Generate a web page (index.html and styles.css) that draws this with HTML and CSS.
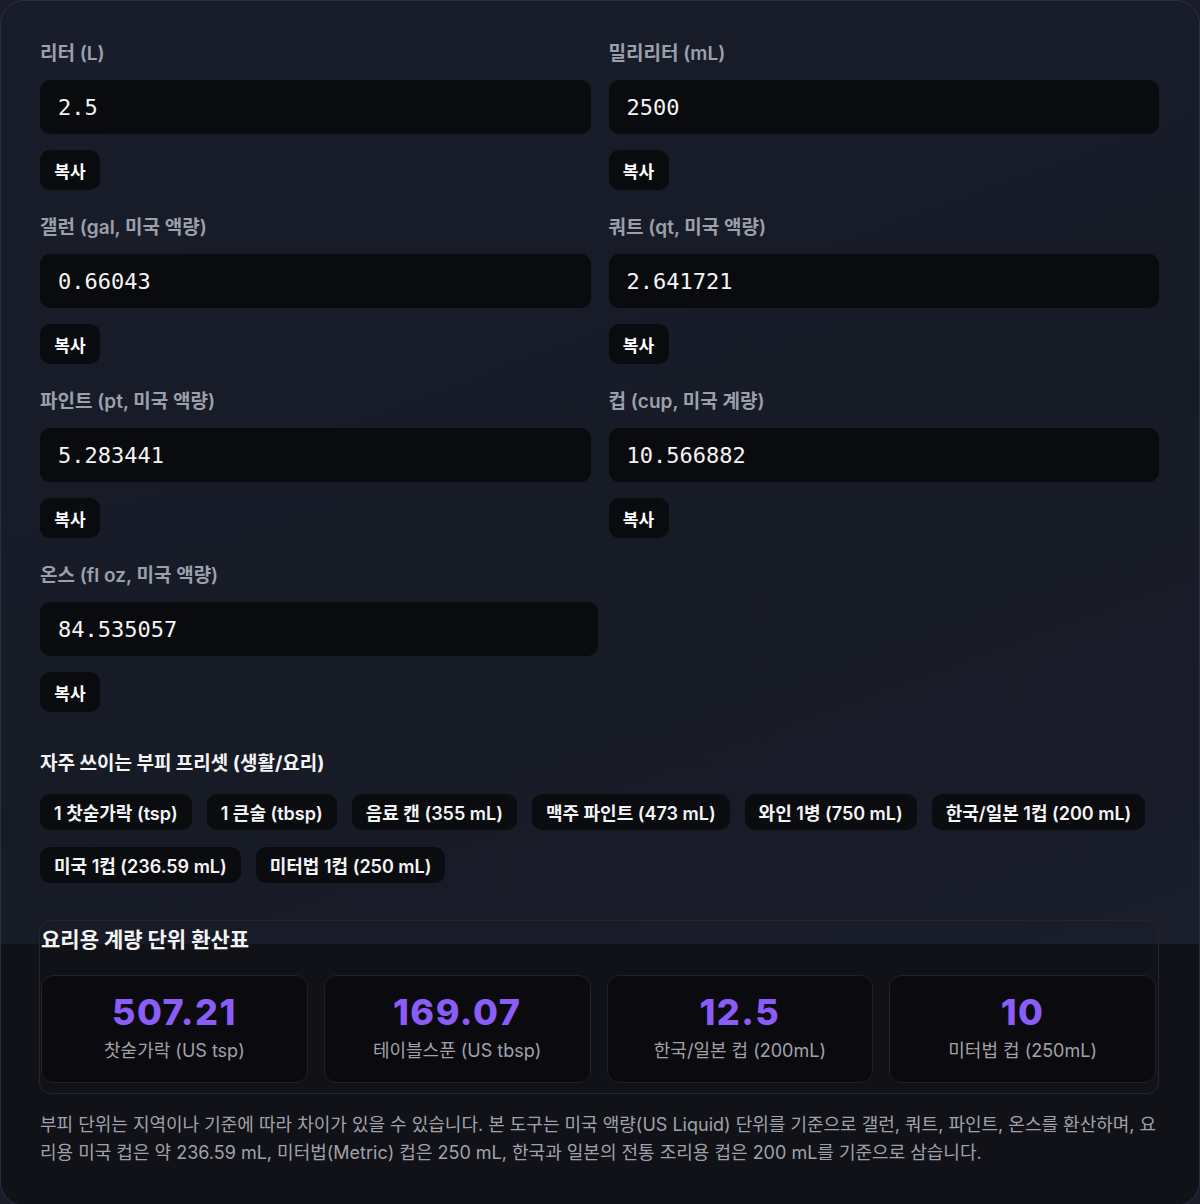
FILE: index.html
```html
<!DOCTYPE html>
<html lang="ko">
<head>
    <meta charset="UTF-8">
    <meta name="viewport" content="width=device-width, initial-scale=1.0">
    <title>부피 단위 변환기</title>
    <link rel="stylesheet" href="styles.css">
</head>
<body>
    <div class="card">
        <div class="fields">
            <div class="field">
                <label for="liter">리터 (L)</label>
                <input type="text" id="liter" value="2.5">
                <button class="copy">복사</button>
            </div>
            <div class="field">
                <label for="ml">밀리리터 (mL)</label>
                <input type="text" id="ml" value="2500">
                <button class="copy">복사</button>
            </div>
            <div class="field">
                <label for="gal">갤런 (gal, 미국 액량)</label>
                <input type="text" id="gal" value="0.66043">
                <button class="copy">복사</button>
            </div>
            <div class="field">
                <label for="qt">쿼트 (qt, 미국 액량)</label>
                <input type="text" id="qt" value="2.641721">
                <button class="copy">복사</button>
            </div>
            <div class="field">
                <label for="pt">파인트 (pt, 미국 액량)</label>
                <input type="text" id="pt" value="5.283441">
                <button class="copy">복사</button>
            </div>
            <div class="field">
                <label for="cup">컵 (cup, 미국 계량)</label>
                <input type="text" id="cup" value="10.566882">
                <button class="copy">복사</button>
            </div>
            <div class="field field-last">
                <label for="oz">온스 (fl oz, 미국 액량)</label>
                <input type="text" id="oz" value="84.535057">
                <button class="copy">복사</button>
            </div>
        </div>

        <h3 class="presets-title">자주 쓰이는 부피 프리셋 (생활/요리)</h3>
        <div class="presets">
            <button class="chip">1 찻숟가락 (tsp)</button>
            <button class="chip">1 큰술 (tbsp)</button>
            <button class="chip">음료 캔 (355 mL)</button>
            <button class="chip">맥주 파인트 (473 mL)</button>
            <button class="chip">와인 1병 (750 mL)</button>
            <button class="chip">한국/일본 1컵 (200 mL)</button>
            <button class="chip">미국 1컵 (236.59 mL)</button>
            <button class="chip">미터법 1컵 (250 mL)</button>
        </div>

        <div class="table">
            <h3>요리용 계량 단위 환산표</h3>
            <div class="stats">
                <div class="stat">
                    <div class="stat-value">507.21</div>
                    <div class="stat-label">찻숟가락 (US tsp)</div>
                </div>
                <div class="stat">
                    <div class="stat-value">169.07</div>
                    <div class="stat-label">테이블스푼 (US tbsp)</div>
                </div>
                <div class="stat">
                    <div class="stat-value">12.5</div>
                    <div class="stat-label">한국/일본 컵 (200mL)</div>
                </div>
                <div class="stat">
                    <div class="stat-value">10</div>
                    <div class="stat-label">미터법 컵 (250mL)</div>
                </div>
            </div>
        </div>

        <p class="note">부피 단위는 지역이나 기준에 따라 차이가 있을 수 있습니다. 본 도구는 미국 액량(US Liquid) 단위를 기준으로 갤런, 쿼트, 파인트, 온스를 환산하며, 요리용 미국 컵은 약 236.59 mL, 미터법(Metric) 컵은 250 mL, 한국과 일본의 전통 조리용 컵은 200 mL를 기준으로 삼습니다.</p>
    </div>
</body>
</html>
```

FILE: styles.css
```css
body {
    margin: 0;
    padding: 0;
    background-color: #1a1d29;
    font-family: "Inter", "Noto Sans CJK KR", sans-serif;
}
.card {
    box-sizing: border-box;
    width: 1200px;
    padding: 40px 40px 38px 39px;
    border: 1px solid #2a2f3e;
    border-radius: 24px;
    background: linear-gradient(160deg, #191d2b 0%, #171b26 60%, #1a1d2a 100%) 0 0 / 100% 943px no-repeat, #111217;
}
.fields {
    display: grid;
    grid-template-columns: 1fr 1fr;
    column-gap: 18px;
    row-gap: 25px;
}
.field label {
    display: block;
    font-size: 19px;
    line-height: 26px;
    font-weight: 600;
    color: #9ca0ab;
    margin-bottom: 13px;
}
.field input {
    display: block;
    box-sizing: border-box;
    width: 100%;
    height: 54px;
    padding: 0 18px;
    border: none;
    border-radius: 10px;
    background-color: #0a0b0e;
    color: #f5f5f5;
    font-family: "DejaVu Sans Mono", monospace;
    font-size: 22px;
    outline: none;
}
.field-last {
    grid-column: 1 / -1;
    max-width: 558px;
}
.copy {
    display: block;
    margin-top: 16px;
    height: 40px;
    width: 60px;
    padding: 0;
    border: none;
    border-radius: 10px;
    background-color: #0a0b0e;
    color: #fff;
    font-family: "Noto Sans CJK KR", sans-serif;
    font-size: 17px;
    font-weight: 700;
    cursor: pointer;
}
.presets-title {
    margin: 39px 0 17px;
    font-size: 19px;
    line-height: 26px;
    font-weight: 700;
    color: #f4f4f5;
}
.presets {
    display: flex;
    flex-wrap: wrap;
    gap: 17px 15px;
}
.chip {
    height: 36px;
    padding: 0 14px;
    border: none;
    border-radius: 10px;
    background-color: #0b0c10;
    color: #f4f4f5;
    font-family: "Inter", "Noto Sans CJK KR", sans-serif;
    font-size: 18px;
    font-weight: 600;
    cursor: pointer;
}
.table {
    margin-top: 37px;
    margin-left: -1px;
    padding: 5px 2px 10px 1px;
    border: 1px solid #24262e;
    border-radius: 12px;
}
.table h3 {
    margin: 0 0 21px;
    font-size: 21px;
    line-height: 28px;
    font-weight: 700;
    color: #f4f4f5;
}
.stats {
    display: grid;
    grid-template-columns: repeat(4, 1fr);
    gap: 16px;
}
.stat {
    height: 108px;
    box-sizing: border-box;
    padding-top: 14px;
    border: 1px solid #1f2128;
    border-radius: 12px;
    background-color: #0b0b0f;
    text-align: center;
}
.stat-value {
    font-size: 36px;
    line-height: 44px;
    font-weight: 800;
    letter-spacing: 1.5px;
    color: #8b5cf6;
}
.stat-label {
    margin-top: 4px;
    font-size: 18px;
    line-height: 26px;
    color: #a1a1aa;
}
.note {
    margin: 17px 0 0;
    font-size: 18px;
    line-height: 28px;
    color: #a1a1aa;
}
```
